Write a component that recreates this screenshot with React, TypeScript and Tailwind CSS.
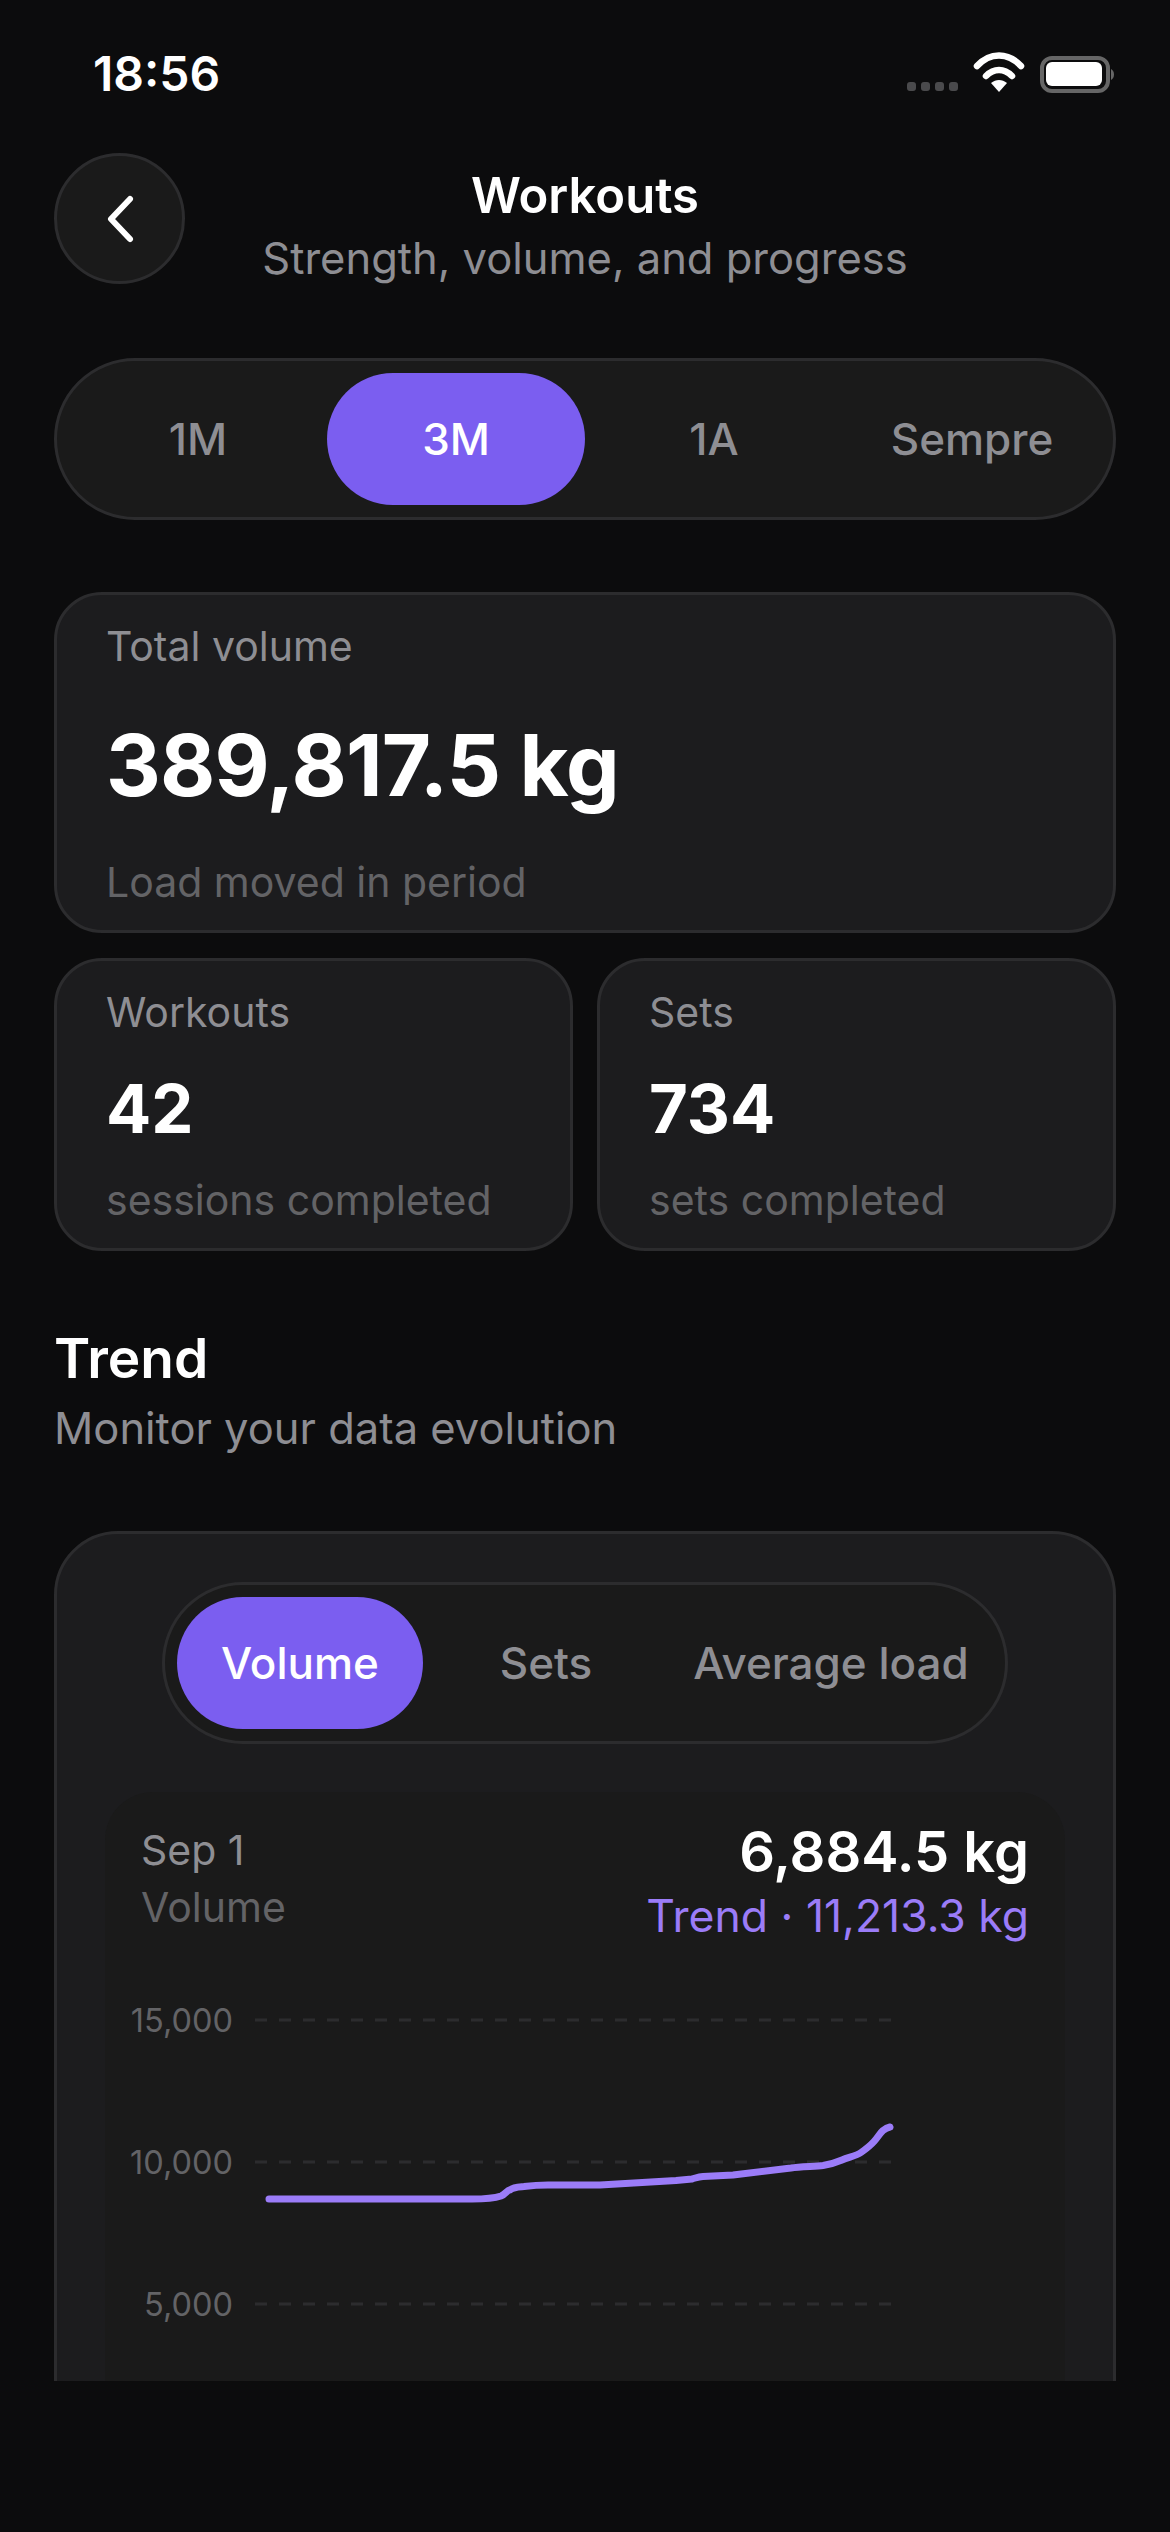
const curve =
  "M269 2199 L472 2199 C486 2199 495 2198 501 2196 C506 2194 507 2190 510 2190 C513 2187 518 2187 524 2186.5 C532 2185.5 540 2185 548 2185 L600 2185 L676 2180.5 L692 2179 C696 2178 698 2176.7 703 2176.5 L733 2175 L791 2168 C800 2166.5 815 2166.5 823 2165.5 C829 2164.5 835 2163 842 2160 C849 2157 856 2156 861 2152.5 C866 2149 870 2146 874 2141.5 C878 2137 880 2133 883 2130.5 C885 2129 888 2127.5 890 2127";

function PillTabs({ items, active }: { items: string[]; active: string }) {
  return (
    <div className="flex w-[1062px] rounded-full border-[3px] border-[#2c2c2e] bg-[#1a1a1a] p-[12px]">
      {items.map((item) => (
        <div
          key={item}
          className={
            item === active
              ? "flex h-[132px] flex-1 items-center justify-center rounded-full bg-[#7b5ef0] text-[44px] font-medium text-white"
              : "flex h-[132px] flex-1 items-center justify-center rounded-full text-[44px] font-medium text-[#8e8e93]"
          }
        >
          {item}
        </div>
      ))}
    </div>
  );
}

function SmallCard({ label, value, note }: { label: string; value: string; note: string }) {
  return (
    <div className="h-[293px] rounded-[48px] border-[3px] border-[#2c2c2e] bg-[#1c1c1e] px-[49px] pt-[29px]">
      <p className="text-[41px] leading-[45px] text-[#8e8e93]">{label}</p>
      <p className="mt-[39px] text-[67px] leading-[70px] font-bold text-white">{value}</p>
      <p className="mt-[34px] text-[41px] leading-[45px] text-[#636366]">{note}</p>
    </div>
  );
}

export default function App() {
  return (
    <main className="h-[2532px] w-[1170px] overflow-hidden bg-[#0c0c0d] font-['Inter',sans-serif]">
      <div className="h-[2381px] overflow-hidden">
        {/* status bar */}
        <div className="flex h-[153px] items-start justify-between pl-[93px] pr-[55px]">
          <span className="mt-[47px] text-[48px] leading-[54px] font-semibold text-white">18:56</span>
          <svg width="210" height="50" viewBox="905 50 210 50" className="mt-[50px]">
            <rect x="907" y="82" width="9" height="9" rx="3" fill="#4a4a4c" />
            <rect x="921" y="82" width="9" height="9" rx="3" fill="#4a4a4c" />
            <rect x="935" y="82" width="9" height="9" rx="3" fill="#4a4a4c" />
            <rect x="949" y="82" width="9" height="9" rx="3" fill="#4a4a4c" />
            <path d="M977 66 C990 52 1008 52 1021 66" fill="none" stroke="#fff" strokeWidth="6.5" strokeLinecap="round" />
            <path d="M986 76 C994 68 1004 68 1012 76" fill="none" stroke="#fff" strokeWidth="6.5" strokeLinecap="round" />
            <path d="M991 83 C996 79 1002 79 1007 83 L999 92 Z" fill="#fff" />
            <rect x="1042" y="58" width="66" height="33" rx="10" fill="none" stroke="#666" strokeWidth="4" />
            <rect x="1046" y="62" width="56" height="24" rx="6" fill="#fff" />
            <path d="M1111 69 C1115 71 1115 78 1111 80 Z" fill="#666" />
          </svg>
        </div>

        {/* header */}
        <div className="grid grid-cols-[131px_1fr_131px] px-[54px]">
          <button className="flex h-[131px] w-[131px] items-center justify-center rounded-full border-[3px] border-[#2c2c2e] bg-[#1a1a1a]">
            <svg width="32" height="50" viewBox="0 0 32 50">
              <path d="M26 5 L7 25 L26 45" fill="none" stroke="#fff" strokeWidth="6" strokeLinecap="round" strokeLinejoin="round" />
            </svg>
          </button>
          <div className="pt-[14px] text-center">
            <h1 className="text-[49px] leading-[58px] font-semibold text-white">Workouts</h1>
            <p className="mt-[8px] text-[43.5px] leading-[50px] text-[#8e8e93]">Strength, volume, and progress</p>
          </div>
        </div>

        <div className="mt-[74px] px-[54px]">
          <PillTabs items={["1M", "3M", "1A", "Sempre"]} active="3M" />

          {/* totals */}
          <div className="mt-[72px] h-[341px] rounded-[48px] border-[3px] border-[#2c2c2e] bg-[#1c1c1e] px-[49px] pt-[29px]">
            <p className="text-[41px] leading-[45px] text-[#8e8e93]">Total volume</p>
            <p className="mt-[47px] text-[85px] leading-[100px] font-bold tracking-[-0.01em] text-white">389,817.5 kg</p>
            <p className="mt-[44px] text-[41px] leading-[45px] text-[#636366]">Load moved in period</p>
          </div>
          <div className="mt-[25px] grid grid-cols-2 gap-[24px]">
            <SmallCard label="Workouts" value="42" note="sessions completed" />
            <SmallCard label="Sets" value="734" note="sets completed" />
          </div>

          {/* trend */}
          <h2 className="mt-[75px] text-[55px] leading-[64px] font-semibold text-white">Trend</h2>
          <p className="mt-[16px] text-[43.5px] leading-[45px] text-[#8e8e93]">Monitor your data evolution</p>

          <div className="mt-[80px] h-[1000px] rounded-[64px] border-[3px] border-[#2c2c2e] bg-[#1c1c1e] px-[48px] pt-[48px]">
            <div className="flex justify-center">
              <div className="flex rounded-full border-[3px] border-[#2c2c2e] bg-[#1a1a1a] p-[12px] text-[44px] font-medium text-[#8e8e93]">
                <div className="flex h-[132px] w-[246px] items-center justify-center rounded-full bg-[#7b5ef0] text-white">Volume</div>
                <div className="flex h-[132px] w-[246px] items-center justify-center">Sets</div>
                <div className="flex h-[132px] w-[324px] items-center justify-center">Average load</div>
              </div>
            </div>

            <div className="mt-[48px] rounded-[48px] bg-[#1a1a1a]">
              <div className="flex h-[198px] justify-between px-[36px] pt-[33px]">
                <div>
                  <p className="text-[41px] leading-[50px] text-[#8e8e93]">Sep 1</p>
                  <p className="mt-[7px] text-[41px] leading-[50px] text-[#636366]">Volume</p>
                </div>
                <div className="-mt-[3px] text-right">
                  <p className="text-[56px] leading-[60px] font-semibold text-white">6,884.5 kg</p>
                  <p className="mt-[9px] text-[44.5px] leading-[50px] text-[#9b7cf8]">Trend · 11,213.3 kg</p>
                </div>
              </div>

              <svg width="958" height="500" viewBox="105 1990 958 500" className="block">
                {[2020, 2162, 2304].map((y) => (
                  <line key={y} x1="255" x2="892" y1={y} y2={y} stroke="#2c2c2e" strokeWidth="3" strokeDasharray="12 12" />
                ))}
                <g fontSize="32.5" fill="#636366" textAnchor="end">
                  <text x="233" y="2032">15,000</text>
                  <text x="233" y="2174">10,000</text>
                  <text x="233" y="2316">5,000</text>
                </g>
                <path d={curve} fill="none" stroke="#9b7cf8" strokeWidth="7" strokeLinecap="round" strokeLinejoin="round" />
              </svg>
            </div>
          </div>
        </div>
      </div>
    </main>
  );
}
